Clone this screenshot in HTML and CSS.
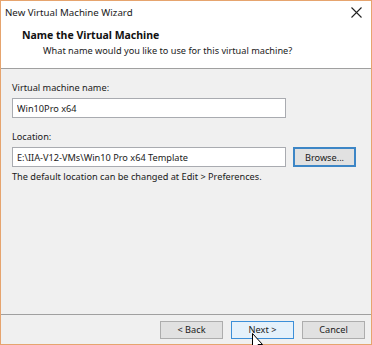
FILE: index.html
```html
<!DOCTYPE html>
<html lang="en">
<head>
    <meta charset="UTF-8">
    <title>New Virtual Machine Wizard</title>
    <link rel="stylesheet" href="styles.css">
</head>
<body>
    <div class="window">
        <div class="top">
            <div class="titlebar">
                <span class="titlebar__text">New Virtual Machine Wizard</span>
                <span class="titlebar__close">
                    <svg width="11" height="11" viewBox="0 0 11 11">
                        <path d="M0.5 0.5 L10.5 10.5 M10.5 0.5 L0.5 10.5" stroke="#222" stroke-width="1.1"/>
                    </svg>
                </span>
            </div>
            <div class="heading">
                <div class="heading__title">Name the Virtual Machine</div>
                <div class="heading__sub">What name would you like to use for this virtual machine?</div>
            </div>
        </div>

        <div class="content">
            <label class="label">Virtual machine name:</label>
            <div class="field">
                <input type="text" class="input" value="Win10Pro x64">
            </div>

            <label class="label label--loc">Location:</label>
            <div class="field">
                <input type="text" class="input" value="E:\IIA-V12-VMs\Win10 Pro x64 Template">
                <button class="button button--focus">Browse...</button>
            </div>
            <p class="hint">The default location can be changed at Edit &gt; Preferences.</p>
        </div>

        <div class="footer">
            <button class="button">&lt; Back</button>
            <button class="button button--hover">Next &gt;</button>
            <button class="button">Cancel</button>
            <svg class="cursor" width="12" height="19" viewBox="0 0 12 19">
                <path d="M0.5 0.5 L0.5 15.5 L4 12.5 L6.5 18 L8.5 17 L6 11.5 L10.5 11.5 Z" fill="#fff" stroke="#000" stroke-width="1"/>
            </svg>
        </div>
    </div>
</body>
</html>
```

FILE: styles.css
```css
body {
    margin: 0;
    font-family: "Noto Sans", "Open Sans", sans-serif;
    font-size: 9.2px;
    color: #1a1a1a;
}

.window {
    width: 372px;
    height: 345px;
    box-sizing: border-box;
    border: 1px solid #e6a46e;
    background: #f0f0f0;
    display: flex;
    flex-direction: column;
}

.top {
    background: #fff;
    border-bottom: 1px solid #a0a0a0;
    height: 67px;
}

.titlebar {
    display: flex;
    justify-content: space-between;
    align-items: center;
    height: 22px;
    padding: 0 9px 0 4px;
}

.titlebar__text {
    font-size: 9.7px;
}

.titlebar__close {
    display: flex;
}

.heading {
    padding: 5px 0 0 21px;
}

.heading__title {
    font-weight: bold;
    font-size: 10.5px;
    line-height: 15px;
    color: #111;
}

.heading__sub {
    padding-left: 21px;
    line-height: 15px;
}

.content {
    flex: 1;
    padding: 12px 0 0 11px;
}

.label {
    display: block;
    line-height: 14px;
}

.label--loc {
    margin-top: 12px;
}

.field {
    display: flex;
    align-items: center;
    gap: 7px;
    margin-top: 3px;
}

.input {
    width: 274px;
    height: 20px;
    box-sizing: border-box;
    border: 1px solid #a9abb0;
    background: #fff;
    font-family: inherit;
    font-size: 9.2px;
    color: #1a1a1a;
    padding: 0 4px;
    margin: 0;
    outline: none;
}

.hint {
    margin: 3px 0 0;
    line-height: 14px;
}

.button {
    width: 63px;
    height: 18px;
    box-sizing: border-box;
    border: 1px solid #adadad;
    background: #e1e1e1;
    font-family: inherit;
    font-size: 9.2px;
    color: #1a1a1a;
    padding: 0;
    margin: 0;
}

.button--focus {
    border: 2px solid #3d86c6;
    height: 20px;
}

.button--hover {
    background: #e5f1fb;
    border-color: #3d8fd8;
}

.footer {
    position: relative;
    border-top: 1px solid #a0a0a0;
    height: 29px;
    display: flex;
    justify-content: flex-end;
    align-items: center;
    gap: 8px;
    padding-right: 6px;
}

.cursor {
    position: absolute;
    left: 251px;
    top: 18px;
}
```
